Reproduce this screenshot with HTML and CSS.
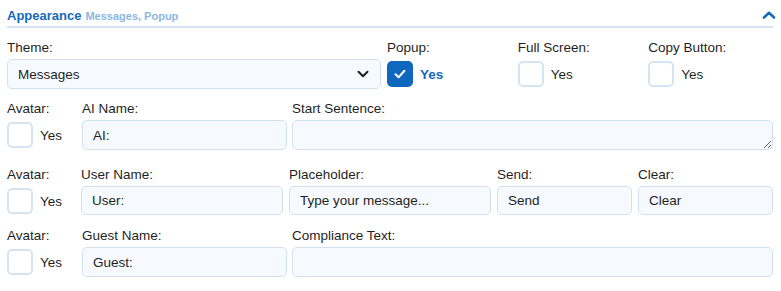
FILE: index.html
```html
<!DOCTYPE html>
<html lang="en">
  <head>
    <meta charset="UTF-8" />
    <title>Appearance</title>
    <link rel="stylesheet" href="styles.css">
  </head>
  <body>
    <div class="panel">
      <div class="panel-head">
        <span class="panel-title">Appearance</span>
        <span class="panel-sub">Messages, Popup</span>
        <svg class="panel-toggle" width="14" height="8" viewBox="0 0 14 8">
          <path d="M2 6.5 L7 1.8 L12 6.5" fill="none" stroke="#1769bd" stroke-width="2.6" stroke-linecap="round" stroke-linejoin="round"/>
        </svg>
      </div>

      <div class="row row-theme">
        <div class="field">
          <label class="field-label" for="theme">Theme:</label>
          <div class="select-wrap">
            <select id="theme" class="control">
              <option>Messages</option>
            </select>
            <svg class="select-arrow" width="12" height="8" viewBox="0 0 12 8">
              <path d="M1.5 1.8 L6 6.2 L10.5 1.8" fill="none" stroke="#1d1d1d" stroke-width="2" stroke-linecap="round" stroke-linejoin="round"/>
            </svg>
          </div>
        </div>
        <div class="field">
          <span class="field-label">Popup:</span>
          <label class="check is-on">
            <span class="check-box">
              <svg width="14" height="12" viewBox="0 0 14 12">
                <path d="M2.5 6.3 L5.6 9.2 L11.5 2.8" fill="none" stroke="#fff" stroke-width="2" stroke-linecap="round" stroke-linejoin="round"/>
              </svg>
            </span>
            Yes
          </label>
        </div>
        <div class="field">
          <span class="field-label">Full Screen:</span>
          <label class="check"><span class="check-box"></span>Yes</label>
        </div>
        <div class="field">
          <span class="field-label">Copy Button:</span>
          <label class="check"><span class="check-box"></span>Yes</label>
        </div>
      </div>

      <div class="row row-wide">
        <div class="field">
          <span class="field-label">Avatar:</span>
          <label class="check"><span class="check-box"></span>Yes</label>
        </div>
        <div class="field">
          <label class="field-label" for="ai-name">AI Name:</label>
          <input type="text" id="ai-name" class="control" value="AI:">
        </div>
        <div class="field">
          <label class="field-label" for="start-sentence">Start Sentence:</label>
          <textarea id="start-sentence" class="control" rows="1"></textarea>
        </div>
      </div>

      <div class="row row-user">
        <div class="field">
          <span class="field-label">Avatar:</span>
          <label class="check"><span class="check-box"></span>Yes</label>
        </div>
        <div class="field">
          <label class="field-label" for="user-name">User Name:</label>
          <input type="text" id="user-name" class="control" value="User:">
        </div>
        <div class="field">
          <label class="field-label" for="placeholder">Placeholder:</label>
          <input type="text" id="placeholder" class="control" value="Type your message...">
        </div>
        <div class="field">
          <label class="field-label" for="send">Send:</label>
          <input type="text" id="send" class="control" value="Send">
        </div>
        <div class="field">
          <label class="field-label" for="clear">Clear:</label>
          <input type="text" id="clear" class="control" value="Clear">
        </div>
      </div>

      <div class="row row-wide">
        <div class="field">
          <span class="field-label">Avatar:</span>
          <label class="check"><span class="check-box"></span>Yes</label>
        </div>
        <div class="field">
          <label class="field-label" for="guest-name">Guest Name:</label>
          <input type="text" id="guest-name" class="control" value="Guest:">
        </div>
        <div class="field">
          <label class="field-label" for="compliance">Compliance Text:</label>
          <input type="text" id="compliance" class="control">
        </div>
      </div>
    </div>
  </body>
</html>
```

FILE: styles.css
```css
/* General styles */
* {
  box-sizing: border-box;
}

body {
  font-family: "Liberation Sans", Arial, sans-serif;
  font-size: 13.5px;
  color: #1f1f1f;
  margin: 0;
  background-color: #fff;
}

.panel {
  padding: 0 8px 0 7px;
}

/* Header */
.panel-head {
  display: flex;
  align-items: baseline;
  padding-top: 7px;
  padding-bottom: 1px;
  line-height: 18px;
  border-bottom: 2px solid #d3e4f3;
}

.panel-title {
  font-weight: bold;
  color: #1769bd;
  font-size: 13px;
}

.panel-sub {
  font-weight: bold;
  color: #8ab8e3;
  font-size: 11px;
  margin-left: 4px;
}

.panel-toggle {
  margin-left: auto;
  margin-right: -3px;
  align-self: center;
  margin-top: -3px;
}

/* Rows */
.row {
  display: grid;
  gap: 6px;
  margin-top: 12px;
}

.row-theme {
  grid-template-columns: 374px 1fr 1fr 1fr;
  margin-top: 12px;
}

.row-wide {
  grid-template-columns: 70px 205px 1fr;
  gap: 5px;
}

.row-user {
  grid-template-columns: 68px 202px 202px 1fr 1fr;
  margin-top: 17px;
}

.field-label {
  display: block;
  line-height: 16px;
  margin-bottom: 3px;
  white-space: nowrap;
}

/* Inputs */
.control {
  display: block;
  width: 100%;
  height: 30px;
  padding: 0 10px;
  font-family: inherit;
  font-size: 13.5px;
  color: #1f1f1f;
  background-color: #f6fafe;
  border: 1px solid #d0e2f2;
  border-radius: 5px;
  margin: 0;
}

.row-user .control {
  height: 29px;
}

textarea.control {
  resize: vertical;
  padding-top: 7px;
}

.select-wrap {
  position: relative;
}

select.control {
  appearance: none;
  -webkit-appearance: none;
  padding-left: 10px;
}

.select-arrow {
  position: absolute;
  right: 12px;
  top: 11px;
  pointer-events: none;
}

/* Checkboxes */
.check {
  display: flex;
  align-items: center;
  height: 30px;
  gap: 7px;
  cursor: pointer;
}

.check-box {
  display: flex;
  align-items: center;
  justify-content: center;
  width: 26px;
  height: 26px;
  border: 2px solid #d3e4f3;
  border-radius: 5px;
  background-color: #fff;
}

.check.is-on {
  color: #1769bd;
  font-weight: bold;
}

.check.is-on .check-box {
  background-color: #1067be;
  border-color: #1067be;
}
```
